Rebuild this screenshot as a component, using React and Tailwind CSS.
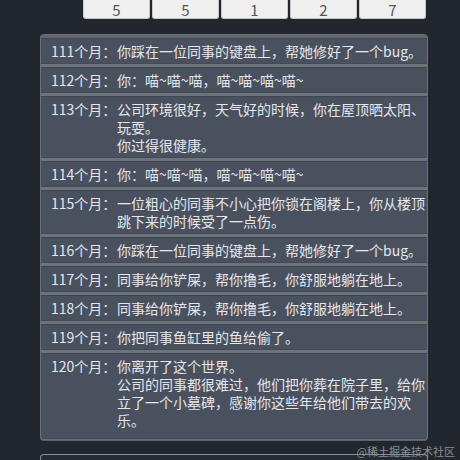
const items = [
  { m: 111, lines: ['你踩在一位同事的键盘上，帮她修好了一个bug。'] },
  { m: 112, lines: ['你：喵~喵~喵，喵~喵~喵~喵~'] },
  { m: 113, lines: ['公司环境很好，天气好的时候，你在屋顶晒太阳、玩耍。', '你过得很健康。'] },
  { m: 114, lines: ['你：喵~喵~喵，喵~喵~喵~喵~'] },
  { m: 115, lines: ['一位粗心的同事不小心把你锁在阁楼上，你从楼顶跳下来的时候受了一点伤。'] },
  { m: 116, lines: ['你踩在一位同事的键盘上，帮她修好了一个bug。'] },
  { m: 117, lines: ['同事给你铲屎，帮你撸毛，你舒服地躺在地上。'] },
  { m: 118, lines: ['同事给你铲屎，帮你撸毛，你舒服地躺在地上。'] },
  { m: 119, lines: ['你把同事鱼缸里的鱼给偷了。'] },
  { m: 120, lines: ['你离开了这个世界。', '公司的同事都很难过，他们把你葬在院子里，给你立了一个小墓碑，感谢你这些年给他们带去的欢乐。'] },
];

const attrs = ['5', '5', '1', '2', '7'];

export default function App() {
  return (
    <div
      className="relative h-[460px] w-[460px] overflow-hidden bg-[#22272e] text-[14px] leading-[18px]"
      style={{ fontFamily: '"Noto Sans CJK SC", "Noto Sans", sans-serif' }}
    >
      {/* attribute buttons, scrolled partly off the top */}
      <div className="ml-[83px] flex gap-[2px]">
        {attrs.map((a, i) => (
          <div
            key={i}
            className="flex h-[19px] w-[67px] items-center justify-center rounded-b-[3px] border border-t-0 border-[#c9c9c9] bg-[#efefef] text-[15px] leading-[15px] text-[#555]"
          >
            {a}
          </div>
        ))}
      </div>

      {/* event log */}
      <div className="ml-[40px] mt-[15px] w-[388px] overflow-hidden rounded-[4px] border border-[#6b7079] bg-[#4a515e] shadow-[0_1px_0_#5c626b]">
        {items.map(it => (
          <div
            key={it.m}
            className="flex border-t-[3px] border-b border-t-[#6e737b] border-b-[#434955] pb-[3px] pl-[10px] pt-[4px] text-[#e4e7ec] shadow-[inset_0_1px_0_#3f4550] first:border-t-[#62676f] last:pb-[9px]"
          >
            <div className="w-[66px] shrink-0">{it.m}个月：</div>
            <div className="min-w-0 flex-1">
              {it.lines.map((l, i) => (
                <div key={i}>{l}</div>
              ))}
            </div>
          </div>
        ))}
      </div>

      {/* next panel peeking in */}
      <div className="ml-[40px] mt-[14px] h-[20px] w-[388px] rounded-t-[4px] border border-b-0 border-[#8a8f96] bg-[#262b33]" />

      <div className="absolute bottom-[2px] right-[5px] text-[11px] leading-[14px] text-[#8b8f95]">@稀土掘金技术社区</div>
    </div>
  );
}
